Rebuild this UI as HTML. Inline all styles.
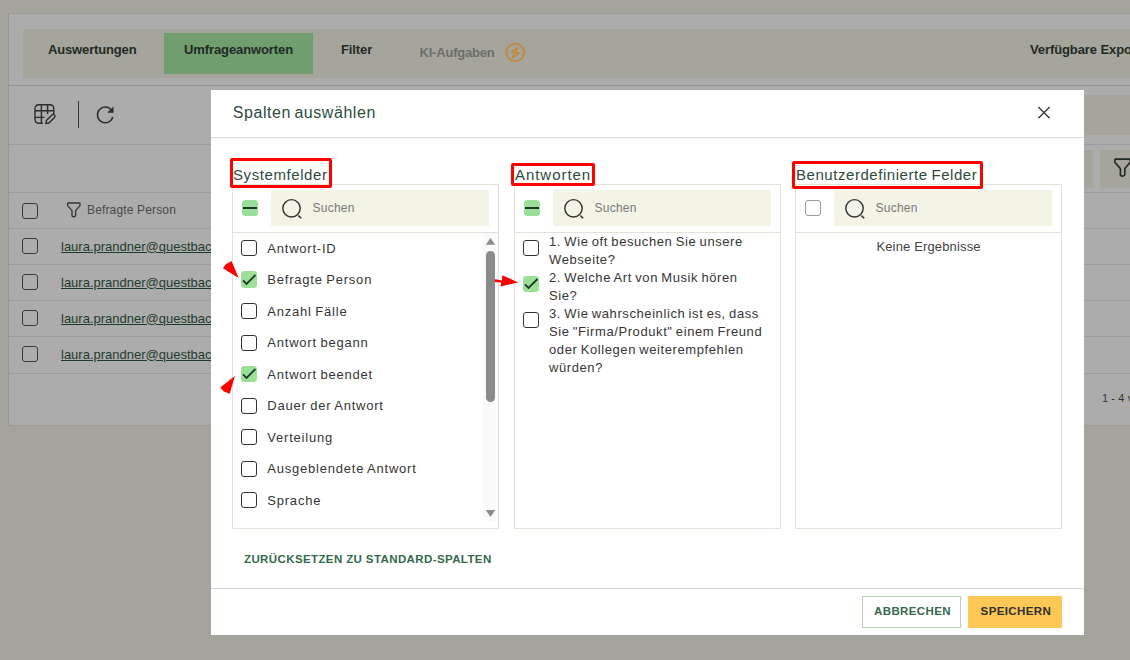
<!DOCTYPE html>
<html><head><meta charset="utf-8"><style>
html,body{margin:0;padding:0;}
body{width:1130px;height:660px;overflow:hidden;position:relative;background:#a5a49c;font-family:"Liberation Sans", sans-serif;}
</style></head><body>
<div style="position:absolute;left:8px;top:13px;width:1200px;height:413px;background:#acacac;border-left:1px solid #97978f;border-top:1px solid #9c9c95;border-bottom:1px solid #9c9c95;box-sizing:border-box"></div>
<div style="position:absolute;left:23px;top:29px;width:1200px;height:49px;background:#a5a59c"></div>
<div style="position:absolute;left:164px;top:33px;width:149px;height:41px;background:#709e6f"></div>
<div style="position:absolute;left:48px;top:43.00px;font-size:13px;line-height:13px;font-weight:700;color:#1f2a25;letter-spacing:-0.15px;word-spacing:0px;white-space:nowrap;">Auswertungen</div>
<div style="position:absolute;left:184px;top:43.00px;font-size:13px;line-height:13px;font-weight:700;color:#1f2a25;letter-spacing:-0.1px;word-spacing:0px;white-space:nowrap;">Umfrageanworten</div>
<div style="position:absolute;left:341px;top:43.00px;font-size:13px;line-height:13px;font-weight:700;color:#1f2a25;letter-spacing:-0.1px;word-spacing:0px;white-space:nowrap;">Filter</div>
<div style="position:absolute;left:419.5px;top:45.80px;font-size:13px;line-height:13px;font-weight:700;color:#6d6d69;letter-spacing:-0.2px;word-spacing:0px;white-space:nowrap;">KI-Aufgaben</div>
<svg style="position:absolute;left:505px;top:43px" width="20" height="20" viewBox="0 0 20 20"><circle cx="10.2" cy="9.5" r="8.8" fill="none" stroke="#c4862e" stroke-width="1.6"/><path d="M12.5 4.7 L6.2 9 L9.6 9.5 L7.6 14.8 L14.2 10 L11 9.3 Z" fill="none" stroke="#c4862e" stroke-width="1.3" stroke-linejoin="round"/></svg>
<div style="position:absolute;left:1030px;top:43.00px;font-size:13px;line-height:13px;font-weight:700;color:#1f2a25;letter-spacing:-0.1px;word-spacing:0px;white-space:nowrap;">Verfügbare Expo</div>
<div style="position:absolute;left:9px;top:85px;width:1200px;height:1px;background:#96968f"></div>
<svg style="position:absolute;left:33px;top:103px" width="24" height="24" viewBox="0 0 24 24"><path d="M9.8 20.2 H6 Q2 20.2 2 16.2 V5.8 Q2 1.8 6 1.8 H16.8 Q20.8 1.8 20.8 5.8 V11" fill="none" stroke="#2b2b2b" stroke-width="1.4"/><path d="M2 7.8 H20.8 M8.4 1.8 V20.2 M14.6 1.8 V11 M2 14.4 H11.5" fill="none" stroke="#2b2b2b" stroke-width="1.4"/><path d="M12.8 20.6 L13.4 17.6 L19 12 Q20.3 10.8 21.5 12 Q22.7 13.2 21.5 14.5 L15.9 20 Z" fill="none" stroke="#2b2b2b" stroke-width="1.35" stroke-linejoin="round"/></svg>
<div style="position:absolute;left:77.5px;top:101px;width:1.5px;height:27px;background:#3a3a3a"></div>
<svg style="position:absolute;left:94px;top:104px" width="22" height="22" viewBox="0 0 22 22"><path d="M17.5 6.2 A7.8 7.8 0 1 0 18.8 13" fill="none" stroke="#2b2b2b" stroke-width="1.5"/><path d="M19.5 2.5 V8.8 H13.2 Z" fill="#2b2b2b"/></svg>
<div style="position:absolute;left:1084px;top:95px;width:200px;height:40px;background:#a5a59c"></div>
<div style="position:absolute;left:9px;top:143.5px;width:1200px;height:1.5px;background:#9d9d9d"></div>
<div style="position:absolute;left:1040px;top:150px;width:53px;height:38px;background:#a5a59c"></div>
<div style="position:absolute;left:1100px;top:150px;width:100px;height:38px;background:#a5a59c"></div>
<svg style="position:absolute;left:1112px;top:156px" width="22" height="24" viewBox="0 0 22 24"><path d="M3.6 3.1 H17.4 Q18.2 3.1 18.2 3.9 V6.3 L12.8 12.6 V19 Q10.6 21.2 8.4 19.2 V12.6 L2.8 6.3 V3.9 Q2.8 3.1 3.6 3.1 Z" fill="none" stroke="#1f2a25" stroke-width="1.6" stroke-linejoin="round"/></svg>
<div style="position:absolute;left:9px;top:191.5px;width:1200px;height:1.5px;background:#9d9d9d"></div>
<div style="position:absolute;left:22px;top:202.5px;width:16px;height:16px;border:1.5px solid #3a3a3a;border-radius:3px;box-sizing:border-box;background:none"></div>
<svg style="position:absolute;left:66px;top:201px" width="16" height="17" viewBox="0 0 16 17"><path d="M2.3 2 H13.3 Q14 2 14 2.7 V4.6 L9.6 9.6 V14.8 Q7.8 16.6 6 15 V9.6 L1.6 4.6 V2.7 Q1.6 2 2.3 2 Z" fill="none" stroke="#333" stroke-width="1.3" stroke-linejoin="round"/></svg>
<div style="position:absolute;left:87px;top:203.84px;font-size:12px;line-height:12px;font-weight:400;color:#4a4a4a;letter-spacing:0.15px;word-spacing:0px;white-space:nowrap;">Befragte Person</div>
<div style="position:absolute;left:9px;top:228px;width:1200px;height:1px;background:#9c9c9c"></div>
<div style="position:absolute;left:9px;top:264px;width:1200px;height:1px;background:#9c9c9c"></div>
<div style="position:absolute;left:9px;top:300px;width:1200px;height:1px;background:#9c9c9c"></div>
<div style="position:absolute;left:9px;top:336px;width:1200px;height:1px;background:#9c9c9c"></div>
<div style="position:absolute;left:9px;top:373px;width:1200px;height:1px;background:#9c9c9c"></div>
<div style="position:absolute;left:22px;top:238px;width:16px;height:16px;border:1.5px solid #3a3a3a;border-radius:3px;box-sizing:border-box;background:none"></div>
<div style="position:absolute;left:61px;top:239.50px;font-size:13px;line-height:13px;font-weight:400;color:#1f3b2d;letter-spacing:0px;word-spacing:0px;white-space:nowrap;text-decoration:underline">laura.prandner@questback.com</div>
<div style="position:absolute;left:22px;top:274px;width:16px;height:16px;border:1.5px solid #3a3a3a;border-radius:3px;box-sizing:border-box;background:none"></div>
<div style="position:absolute;left:61px;top:275.50px;font-size:13px;line-height:13px;font-weight:400;color:#1f3b2d;letter-spacing:0px;word-spacing:0px;white-space:nowrap;text-decoration:underline">laura.prandner@questback.com</div>
<div style="position:absolute;left:22px;top:310px;width:16px;height:16px;border:1.5px solid #3a3a3a;border-radius:3px;box-sizing:border-box;background:none"></div>
<div style="position:absolute;left:61px;top:311.50px;font-size:13px;line-height:13px;font-weight:400;color:#1f3b2d;letter-spacing:0px;word-spacing:0px;white-space:nowrap;text-decoration:underline">laura.prandner@questback.com</div>
<div style="position:absolute;left:22px;top:346px;width:16px;height:16px;border:1.5px solid #3a3a3a;border-radius:3px;box-sizing:border-box;background:none"></div>
<div style="position:absolute;left:61px;top:347.50px;font-size:13px;line-height:13px;font-weight:400;color:#1f3b2d;letter-spacing:0px;word-spacing:0px;white-space:nowrap;text-decoration:underline">laura.prandner@questback.com</div>
<div style="position:absolute;left:1102px;top:392.69px;font-size:11px;line-height:11px;font-weight:400;color:#333;letter-spacing:0.6px;word-spacing:-1px;white-space:nowrap;">1 - 4 von 4</div>
<div style="position:absolute;left:211px;top:90px;width:873px;height:545px;background:#fff"></div>
<div style="position:absolute;left:232.8px;top:105.46px;font-size:16px;line-height:16px;font-weight:400;color:#2f4b3f;letter-spacing:0.55px;word-spacing:-1.5px;white-space:nowrap;">Spalten auswählen</div>
<svg style="position:absolute;left:1036px;top:104.5px" width="16" height="16" viewBox="0 0 16 16"><path d="M2.3 2 L13.7 13.3 M13.7 2 L2.3 13.3" stroke="#444" stroke-width="1.6" fill="none"/></svg>
<div style="position:absolute;left:211px;top:137px;width:873px;height:1px;background:#dcdcdc"></div>
<div style="position:absolute;left:232px;top:184px;width:267px;height:345px;border:1px solid #e3e3d8;box-sizing:border-box"></div>
<div style="position:absolute;left:232px;top:232px;width:267px;height:1px;background:#e3e3d8"></div>
<div style="position:absolute;left:271px;top:190px;width:218px;height:36px;background:#f3f3e6"></div>
<svg style="position:absolute;left:281px;top:198px" width="22" height="22" viewBox="0 0 22 22"><circle cx="10.5" cy="10.3" r="8.7" fill="none" stroke="#333" stroke-width="1.45"/><path d="M17.4 17.6 L20.2 20.2" stroke="#333" stroke-width="1.45"/></svg>
<div style="position:absolute;left:312.5px;top:201.84px;font-size:12px;line-height:12px;font-weight:400;color:#7a7a7a;letter-spacing:0.25px;word-spacing:0px;white-space:nowrap;">Suchen</div>
<div style="position:absolute;left:233px;top:167.30px;font-size:15px;line-height:15px;font-weight:400;color:#2f4a3d;letter-spacing:0.58px;word-spacing:0px;white-space:nowrap;">Systemfelder</div>
<div style="position:absolute;left:229.5px;top:158.2px;width:102.0px;height:29.80000000000001px;border:3px solid #ff0000;border-radius:2px;box-sizing:border-box"></div>
<div style="position:absolute;left:514px;top:184px;width:267px;height:345px;border:1px solid #e3e3d8;box-sizing:border-box"></div>
<div style="position:absolute;left:514px;top:232px;width:267px;height:1px;background:#e3e3d8"></div>
<div style="position:absolute;left:553px;top:190px;width:218px;height:36px;background:#f3f3e6"></div>
<svg style="position:absolute;left:563px;top:198px" width="22" height="22" viewBox="0 0 22 22"><circle cx="10.5" cy="10.3" r="8.7" fill="none" stroke="#333" stroke-width="1.45"/><path d="M17.4 17.6 L20.2 20.2" stroke="#333" stroke-width="1.45"/></svg>
<div style="position:absolute;left:594.5px;top:201.84px;font-size:12px;line-height:12px;font-weight:400;color:#7a7a7a;letter-spacing:0.25px;word-spacing:0px;white-space:nowrap;">Suchen</div>
<div style="position:absolute;left:515px;top:167.30px;font-size:15px;line-height:15px;font-weight:400;color:#2f4a3d;letter-spacing:0.95px;word-spacing:0px;white-space:nowrap;">Antworten</div>
<div style="position:absolute;left:510.6px;top:163.4px;width:84.89999999999998px;height:23.099999999999994px;border:3px solid #ff0000;border-radius:2px;box-sizing:border-box"></div>
<div style="position:absolute;left:795px;top:184px;width:267px;height:345px;border:1px solid #e3e3d8;box-sizing:border-box"></div>
<div style="position:absolute;left:795px;top:232px;width:267px;height:1px;background:#e3e3d8"></div>
<div style="position:absolute;left:834px;top:190px;width:218px;height:36px;background:#f3f3e6"></div>
<svg style="position:absolute;left:844px;top:198px" width="22" height="22" viewBox="0 0 22 22"><circle cx="10.5" cy="10.3" r="8.7" fill="none" stroke="#333" stroke-width="1.45"/><path d="M17.4 17.6 L20.2 20.2" stroke="#333" stroke-width="1.45"/></svg>
<div style="position:absolute;left:875.5px;top:201.84px;font-size:12px;line-height:12px;font-weight:400;color:#7a7a7a;letter-spacing:0.25px;word-spacing:0px;white-space:nowrap;">Suchen</div>
<div style="position:absolute;left:796px;top:167.30px;font-size:15px;line-height:15px;font-weight:400;color:#2f4a3d;letter-spacing:0.55px;word-spacing:-0.9px;white-space:nowrap;">Benutzerdefinierte Felder</div>
<div style="position:absolute;left:792px;top:160.7px;width:191px;height:28.30000000000001px;border:3px solid #ff0000;border-radius:2px;box-sizing:border-box"></div>
<div style="position:absolute;left:242px;top:200px;width:16px;height:16px;background:#9ade97;border-radius:3.5px"></div>
<div style="position:absolute;left:243px;top:206.5px;width:14px;height:2.5px;background:#1e3a2c"></div>
<div style="position:absolute;left:524px;top:200px;width:16px;height:16px;background:#9ade97;border-radius:3.5px"></div>
<div style="position:absolute;left:525px;top:206.5px;width:14px;height:2.5px;background:#1e3a2c"></div>
<div style="position:absolute;left:805px;top:200px;width:16px;height:16px;border:1px solid #9a9a9a;border-radius:3px;box-sizing:border-box;background:none"></div>
<div style="position:absolute;left:241px;top:240.0px;width:16px;height:16px;border:1.5px solid #333;border-radius:3px;box-sizing:border-box;background:none"></div>
<div style="position:absolute;left:267.3px;top:241.50px;font-size:13px;line-height:13px;font-weight:400;color:#363636;letter-spacing:0.78px;word-spacing:-0.8px;white-space:nowrap;">Antwort-ID</div>
<div style="position:absolute;left:241px;top:271.0px;width:16px;height:16.5px;background:#9be096;border-radius:3.5px"></div>
<svg style="position:absolute;left:241px;top:271.5px" width="16" height="16" viewBox="0 0 16 16"><path d="M2 8.4 L5.5 11.9 L14.5 3" fill="none" stroke="#1e3a2c" stroke-width="1.8"/></svg>
<div style="position:absolute;left:267.3px;top:273.00px;font-size:13px;line-height:13px;font-weight:400;color:#363636;letter-spacing:0.78px;word-spacing:-0.8px;white-space:nowrap;">Befragte Person</div>
<div style="position:absolute;left:241px;top:303.0px;width:16px;height:16px;border:1.5px solid #333;border-radius:3px;box-sizing:border-box;background:none"></div>
<div style="position:absolute;left:267.3px;top:304.50px;font-size:13px;line-height:13px;font-weight:400;color:#363636;letter-spacing:0.78px;word-spacing:-0.8px;white-space:nowrap;">Anzahl Fälle</div>
<div style="position:absolute;left:241px;top:334.5px;width:16px;height:16px;border:1.5px solid #333;border-radius:3px;box-sizing:border-box;background:none"></div>
<div style="position:absolute;left:267.3px;top:336.00px;font-size:13px;line-height:13px;font-weight:400;color:#363636;letter-spacing:0.78px;word-spacing:-0.8px;white-space:nowrap;">Antwort begann</div>
<div style="position:absolute;left:241px;top:365.5px;width:16px;height:16.5px;background:#9be096;border-radius:3.5px"></div>
<svg style="position:absolute;left:241px;top:366.0px" width="16" height="16" viewBox="0 0 16 16"><path d="M2 8.4 L5.5 11.9 L14.5 3" fill="none" stroke="#1e3a2c" stroke-width="1.8"/></svg>
<div style="position:absolute;left:267.3px;top:367.50px;font-size:13px;line-height:13px;font-weight:400;color:#363636;letter-spacing:0.78px;word-spacing:-0.8px;white-space:nowrap;">Antwort beendet</div>
<div style="position:absolute;left:241px;top:397.5px;width:16px;height:16px;border:1.5px solid #333;border-radius:3px;box-sizing:border-box;background:none"></div>
<div style="position:absolute;left:267.3px;top:399.00px;font-size:13px;line-height:13px;font-weight:400;color:#363636;letter-spacing:0.78px;word-spacing:-0.8px;white-space:nowrap;">Dauer der Antwort</div>
<div style="position:absolute;left:241px;top:429.0px;width:16px;height:16px;border:1.5px solid #333;border-radius:3px;box-sizing:border-box;background:none"></div>
<div style="position:absolute;left:267.3px;top:430.50px;font-size:13px;line-height:13px;font-weight:400;color:#363636;letter-spacing:0.78px;word-spacing:-0.8px;white-space:nowrap;">Verteilung</div>
<div style="position:absolute;left:241px;top:460.5px;width:16px;height:16px;border:1.5px solid #333;border-radius:3px;box-sizing:border-box;background:none"></div>
<div style="position:absolute;left:267.3px;top:462.00px;font-size:13px;line-height:13px;font-weight:400;color:#363636;letter-spacing:0.78px;word-spacing:-0.8px;white-space:nowrap;">Ausgeblendete Antwort</div>
<div style="position:absolute;left:241px;top:492.0px;width:16px;height:16px;border:1.5px solid #333;border-radius:3px;box-sizing:border-box;background:none"></div>
<div style="position:absolute;left:267.3px;top:493.50px;font-size:13px;line-height:13px;font-weight:400;color:#363636;letter-spacing:0.78px;word-spacing:-0.8px;white-space:nowrap;">Sprache</div>
<div style="position:absolute;left:483px;top:233px;width:15px;height:288px;background:#fafafa"></div>
<svg style="position:absolute;left:483px;top:236px" width="15" height="10" viewBox="0 0 15 10"><path d="M2.8 8.8 L7.5 2 L12.2 8.8 Z" fill="#8a8a8a"/></svg>
<div style="position:absolute;left:486px;top:251px;width:9px;height:151px;background:#8a8a8a;border-radius:4.5px"></div>
<svg style="position:absolute;left:483px;top:507px" width="15" height="12" viewBox="0 0 15 12"><path d="M2.8 3 L12.2 3 L7.5 10 Z" fill="#8a8a8a"/></svg>
<div style="position:absolute;left:523px;top:240px;width:16px;height:16px;border:1.5px solid #333;border-radius:3px;box-sizing:border-box;background:none"></div>
<div style="position:absolute;left:523px;top:275.5px;width:16px;height:16.5px;background:#9be096;border-radius:3.5px"></div>
<svg style="position:absolute;left:523px;top:276px" width="16" height="16" viewBox="0 0 16 16"><path d="M2 8.4 L5.5 11.9 L14.5 3" fill="none" stroke="#1e3a2c" stroke-width="1.8"/></svg>
<div style="position:absolute;left:523px;top:312px;width:16px;height:16px;border:1.5px solid #333;border-radius:3px;box-sizing:border-box;background:none"></div>
<div style="position:absolute;left:549px;top:235.00px;font-size:13px;line-height:13px;font-weight:400;color:#363636;letter-spacing:0.59px;word-spacing:-0.9px;white-space:nowrap;">1. Wie oft besuchen Sie unsere</div>
<div style="position:absolute;left:549px;top:253.00px;font-size:13px;line-height:13px;font-weight:400;color:#363636;letter-spacing:0.59px;word-spacing:-0.9px;white-space:nowrap;">Webseite?</div>
<div style="position:absolute;left:549px;top:271.00px;font-size:13px;line-height:13px;font-weight:400;color:#363636;letter-spacing:0.59px;word-spacing:-0.9px;white-space:nowrap;">2. Welche Art von Musik hören</div>
<div style="position:absolute;left:549px;top:289.00px;font-size:13px;line-height:13px;font-weight:400;color:#363636;letter-spacing:0.59px;word-spacing:-0.9px;white-space:nowrap;">Sie?</div>
<div style="position:absolute;left:549px;top:307.00px;font-size:13px;line-height:13px;font-weight:400;color:#363636;letter-spacing:0.59px;word-spacing:-0.9px;white-space:nowrap;">3. Wie wahrscheinlich ist es, dass</div>
<div style="position:absolute;left:549px;top:325.00px;font-size:13px;line-height:13px;font-weight:400;color:#363636;letter-spacing:0.59px;word-spacing:-0.9px;white-space:nowrap;">Sie "Firma/Produkt" einem Freund</div>
<div style="position:absolute;left:549px;top:343.00px;font-size:13px;line-height:13px;font-weight:400;color:#363636;letter-spacing:0.59px;word-spacing:-0.9px;white-space:nowrap;">oder Kollegen weiterempfehlen</div>
<div style="position:absolute;left:549px;top:361.00px;font-size:13px;line-height:13px;font-weight:400;color:#363636;letter-spacing:0.59px;word-spacing:-0.9px;white-space:nowrap;">würden?</div>
<div style="position:absolute;left:876.4px;top:240.00px;font-size:13px;line-height:13px;font-weight:400;color:#424242;letter-spacing:0.15px;word-spacing:0px;white-space:nowrap;">Keine Ergebnisse</div>
<div style="position:absolute;left:244px;top:554.27px;font-size:11.5px;line-height:11.5px;font-weight:700;color:#336a4b;letter-spacing:0.39px;word-spacing:0px;white-space:nowrap;">ZURÜCKSETZEN ZU STANDARD-SPALTEN</div>
<div style="position:absolute;left:211px;top:588px;width:873px;height:1px;background:#d8d8d8"></div>
<div style="position:absolute;left:862px;top:596px;width:99px;height:31.5px;border:1px solid #b9d0b5;box-sizing:border-box"></div>
<div style="position:absolute;left:874px;top:605.77px;font-size:11.5px;line-height:11.5px;font-weight:700;color:#336a4b;letter-spacing:0.39px;word-spacing:0px;white-space:nowrap;">ABBRECHEN</div>
<div style="position:absolute;left:968px;top:596px;width:94px;height:31.5px;background:#fdc855"></div>
<div style="position:absolute;left:980.6px;top:605.77px;font-size:11.5px;line-height:11.5px;font-weight:700;color:#2f2f2f;letter-spacing:0.39px;word-spacing:0px;white-space:nowrap;">SPEICHERN</div>
<svg style="position:absolute;left:210px;top:250px" width="40" height="40" viewBox="0 0 40 40"><path d="M21.5 10.9 L28.7 27.9 L12.9 18.2 L16.2 13.8 L17.8 13.2 Z" fill="#ff0000"/></svg>
<svg style="position:absolute;left:210px;top:362px" width="40" height="40" viewBox="0 0 40 40"><path d="M24.9 14.1 L19.7 31.8 L13.8 29.4 L10.2 25.5 Z" fill="#ff0000"/></svg>
<svg style="position:absolute;left:490px;top:270px" width="32" height="20" viewBox="0 0 32 20"><path d="M4.8 9.2 Q8 9.6 12 10.6 L12.4 5.2 L28.2 12.4 L10.6 16.4 L11.2 12.6 Q8 12.4 4.8 12 Z" fill="#ff0000"/></svg>
</body></html>
